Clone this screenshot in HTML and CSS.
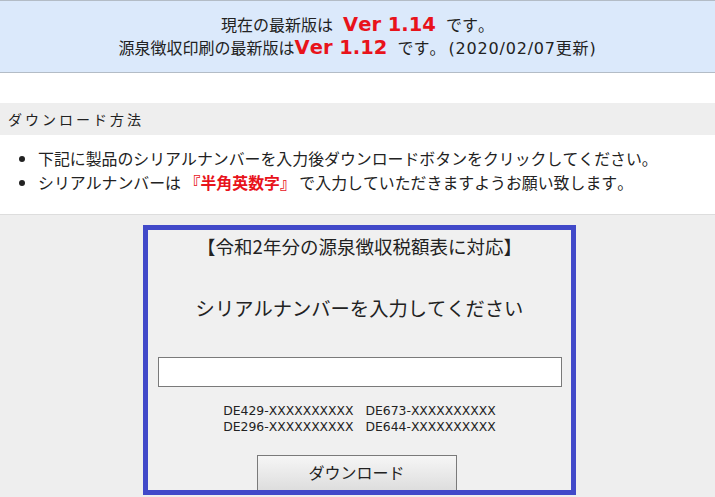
FILE: index.html
```html
<!DOCTYPE html>
<html lang="ja">
<head>
    <meta charset="UTF-8">
    <meta name="viewport" content="width=device-width, initial-scale=1.0">
    <title>ダウンロード</title>
    <link rel="stylesheet" href="styles.css">
</head>
<body>
    <div class="version-info">
        <p>現在の最新版は <span class="ver">Ver 1.14</span> です。</p>
        <p>源泉徴収印刷の最新版は<span class="ver">Ver 1.12</span> です。<span class="date">(2020/02/07更新)</span></p>
    </div>

    <div class="spacer"></div>

    <h2 class="section-title">ダウンロード方法</h2>

    <ul class="notes">
        <li>下記に製品のシリアルナンバーを入力後ダウンロードボタンをクリックしてください。</li>
        <li>シリアルナンバーは <strong class="em-red">『半角英数字』</strong> で入力していただきますようお願い致します。</li>
    </ul>

    <div class="download-area">
        <form class="download-box" onsubmit="return false;">
            <p class="box-title">【令和2年分の源泉徴収税額表に対応】</p>
            <p class="box-lead">シリアルナンバーを入力してください</p>
            <input type="text" class="serial-input" name="serial">
            <p class="serial-examples">
                DE429-XXXXXXXXXX&nbsp;&nbsp;&nbsp;DE673-XXXXXXXXXX<br>
                DE296-XXXXXXXXXX&nbsp;&nbsp;&nbsp;DE644-XXXXXXXXXX
            </p>
            <button type="submit" class="btn-download">ダウンロード</button>
        </form>
    </div>
</body>
</html>
```

FILE: styles.css
```css
body {
    font-family: "Noto Sans CJK JP", "Noto Sans", sans-serif;
    font-kerning: none;
    margin: 0;
    padding: 0;
    color: #222;
    background: #eeeeee;
    height: 497px;
    overflow: hidden;
}

.version-info {
    background-color: #dbe9fb;
    border-top: 1px solid #b3bcc6;
    border-bottom: 1px solid #b3bcc6;
    height: 71px;
    padding: 0;
    text-align: center;
    font-family: "DejaVu Sans", "Noto Sans CJK JP", sans-serif;
    font-size: 16px;
    line-height: 22px;
    word-spacing: 5px;
}

.version-info p {
    margin: 0;
}

.version-info p:first-child {
    padding-top: 13px;
}

.ver {
    color: #e8131b;
    font-weight: bold;
    font-size: 19.5px;
    word-spacing: 0;
}

.date {
    letter-spacing: 0.8px;
    margin-left: 3px;
}

.spacer {
    height: 30px;
    background: #fff;
}

.section-title {
    margin: 0;
    height: 32px;
    line-height: 32px;
    padding-left: 8px;
    font-size: 14px;
    font-weight: normal;
    letter-spacing: 3px;
    background: #eeeeee;
}

.notes {
    margin: 0;
    padding: 12px 0 19px 38px;
    background: #fff;
    border-bottom: 1px solid #dddddd;
    font-size: 15.9px;
    line-height: 24px;
}

.em-red {
    color: #e8131b;
}

.download-area {
    padding: 10px 0 0 4px;
}

.download-box {
    width: 423px;
    height: 260px;
    margin: 0 auto;
    border: 5px solid #4149c9;
    background: #f0f0f0;
    display: flex;
    flex-direction: column;
    align-items: center;
    overflow: hidden;
}

.download-box > * {
    flex-shrink: 0;
}

.box-title {
    margin: 6px 0 0;
    font-size: 18.5px;
    line-height: 20px;
}

.box-lead {
    margin: 42px 0 0;
    font-size: 19.3px;
    line-height: 20px;
}

.serial-input {
    margin-top: 39px;
    width: 404px;
    height: 30px;
    box-sizing: border-box;
    border: 1px solid #7a7a7a;
    background: #fff;
}

.serial-examples {
    margin: 16px 0 0;
    font-family: "DejaVu Sans", sans-serif;
    font-size: 12.4px;
    line-height: 16px;
    text-align: center;
}

.btn-download {
    margin: 20px 6px 0 0;
    width: 200px;
    height: 38px;
    border: 1px solid #7a7a7a;
    background: linear-gradient(#f6f6f6, #dcdcdc);
    font-family: inherit;
    font-size: 16px;
    color: #222;
    padding: 0 0 4px;
}
```
